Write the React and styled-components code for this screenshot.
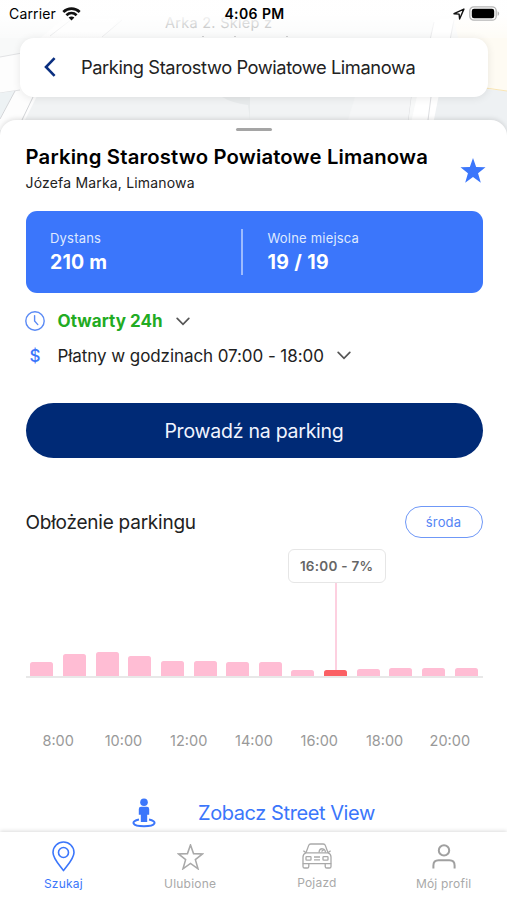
import React, { useState } from 'react';
import styled, { createGlobalStyle } from 'styled-components';

const OCCUPANCY = [
	{ hour: 7, height: 14 },
	{ hour: 8, height: 22.5 },
	{ hour: 9, height: 24 },
	{ hour: 10, height: 20 },
	{ hour: 11, height: 15.5 },
	{ hour: 12, height: 15.5 },
	{ hour: 13, height: 14 },
	{ hour: 14, height: 14 },
	{ hour: 15, height: 6 },
	{ hour: 16, height: 6, percent: 7 },
	{ hour: 17, height: 7 },
	{ hour: 18, height: 8 },
	{ hour: 19, height: 8 },
	{ hour: 20, height: 8 },
];

const HOURS = ['8:00', '10:00', '12:00', '14:00', '16:00', '18:00', '20:00'];

const STAR = 'M12 .8 L14.75 8.7 L22.9 9 L16.4 14.1 L18.8 22.4 L12 17.5 L5.2 22.4 L7.6 14.1 L1.1 9 L9.25 8.7 Z';

const WifiIcon = () => (
	<svg width="19" height="14" viewBox="0 0 19 14" fill="none" stroke="#111" strokeWidth="2.7">
		<path d="M1.3 4.9 C6 .5 13 .5 17.7 4.9" />
		<path d="M4.4 8.2 C7.4 5.5 11.6 5.5 14.6 8.2" />
		<path d="M9.5 13.6 L6.6 10.6 C8.3 9.2 10.7 9.2 12.4 10.6 Z" fill="#111" stroke="none" />
	</svg>
);

const LocationIcon = () => (
	<svg width="12" height="12" viewBox="0 0 12 12" fill="none" stroke="#111" strokeWidth="1.4" strokeLinejoin="round">
		<path d="M1 5.7 L10.9 1.1 L6.6 11 L6.1 6.1 Z" />
	</svg>
);

const BatteryIcon = () => (
	<svg width="31" height="15" viewBox="0 0 31 15">
		<rect x=".8" y=".8" width="26.4" height="13.4" rx="4" fill="#fff" stroke="#b5b5b5" strokeWidth="1.3" />
		<rect x="2.8" y="2.8" width="22.4" height="9.4" rx="2.2" fill="#000" />
		<path d="M28.6 5.2 C30.6 6 30.6 9 28.6 9.8 Z" fill="#b5b5b5" />
	</svg>
);

const ClockIcon = () => (
	<svg width="20" height="20" viewBox="0 0 20 20" fill="none" stroke="#5a8af5" strokeWidth="1.4" strokeLinecap="round">
		<circle cx="10" cy="10" r="9.2" />
		<path d="M9.6 4.6 V10 L12.8 13.6" />
	</svg>
);

const ChevronDown = () => (
	<svg width="14" height="9" viewBox="0 0 14 9" fill="none" stroke="#555" strokeWidth="1.7" strokeLinecap="round">
		<path d="M1.2 1.4 L7 7.3 L12.8 1.4" />
	</svg>
);

const StreetViewIcon = () => (
	<svg width="24" height="30" viewBox="0 0 24 30" fill="#3b76fb">
		<circle cx="12" cy="4.2" r="3.8" />
		<path d="M9 8.8 H15 Q17.2 8.8 17.2 11 V16.8 H15.2 V24 H8.8 V16.8 H6.8 V11 Q6.8 8.8 9 8.8 Z" />
		<path d="M7 21.5 C-1.5 23.2 -.5 28.2 12 28.2 C24.5 28.2 25.5 23.2 17 21.5" fill="none" stroke="#3b76fb" strokeWidth="1.9" />
	</svg>
);

const PinIcon = () => (
	<svg width="24" height="31" viewBox="0 0 24 31" fill="none" stroke="#3b76fb" strokeWidth="1.6" strokeLinejoin="round">
		<path d="M12.5 29.6 C8 23.5 2 17.5 2 11.5 C2 5.4 7 1 12.5 1 C18 1 23 5.4 23 11.5 C23 17.5 17 23.5 12.5 29.6 Z" />
		<circle cx="12.5" cy="11.5" r="5" />
	</svg>
);

const OutlineStar = () => (
	<svg width="27" height="26" viewBox="0 0 24 23.5" fill="none" stroke="#a9a9a9" strokeWidth="1.4">
		<path d={STAR} />
	</svg>
);

const CarIcon = () => (
	<svg width="30" height="26" viewBox="0 0 30 26" fill="none" stroke="#a9a9a9" strokeWidth="1.3" strokeLinejoin="round">
		<path d="M4 9.8 L6.6 2.6 Q7.1 1 8.8 1 H21.2 Q22.9 1 23.4 2.6 L26 9.8" />
		<path d="M4 9.8 H26 Q29 10.8 29 14 V20.6 H1 V14 Q1 10.8 4 9.8 Z" />
		<path d="M4 9.8 L1.4 7.8 M26 9.8 L28.6 7.8" />
		<path d="M1 20.6 V23.4 Q1 25 2.6 25 H5.2 Q6.8 25 6.8 23.4 V20.6 M23.2 20.6 V23.4 Q23.2 25 24.8 25 H27.4 Q29 25 29 23.4 V20.6" />
		<rect x="4" y="13.6" width="5" height="3.6" rx=".6" />
		<rect x="21" y="13.6" width="5" height="3.6" rx=".6" />
		<path d="M12 14 H18 M12 16.8 H18" />
		<path d="M17 9.6 C17.4 4.4 23.4 4.6 23.4 9.6 M19.5 8.6 L21.6 6.8" />
	</svg>
);

const ProfileIcon = () => (
	<svg width="24" height="26" viewBox="0 0 24 26" fill="none" stroke="#a0a0a0" strokeWidth="2">
		<circle cx="12" cy="6.4" r="5.2" />
		<path d="M1.4 24.4 V21.4 Q1.4 16.2 6.6 16.2 H17.4 Q22.6 16.2 22.6 21.4 V24.4" />
	</svg>
);

const TABS = [
	{ label: 'Szukaj', icon: <PinIcon /> },
	{ label: 'Ulubione', icon: <OutlineStar /> },
	{ label: 'Pojazd', icon: <CarIcon />, lift: 1 },
	{ label: 'Mój profil', icon: <ProfileIcon /> },
];

const MapBackground = () => (
	<StyledMap width="507" height="150" viewBox="0 0 507 150">
		<rect width="507" height="150" fill="#f8f9f9" />
		<path d="M0 97 H358 L350 150 H0 Z" fill="#f1f3f4" />
		<path d="M428 90 Q470 86 507 91 V150 H425 Z" fill="#eef1f3" />
		<path d="M454 20 L507 16 V91 L470 87 Z" fill="#fefbf3" />
		<path d="M470 87 Q490 88 507 91" stroke="#f8e5b4" fill="none" />
		<path d="M0 57 L22 53 L62 20 L120 18 L100 42 L40 90 L20 130 H0 Z" fill="#fdfdfd" />
		<path d="M0 57 L22 53 M50 36 L72 19 M102 37 L122 20 M0 93 L20 90" stroke="#e1e2e4" fill="none" />
		<path d="M0 93 L15 91 L0 118 Z" fill="#edf2f4" />
		<path d="M15 91 L0 119 M33 97 L22 120" stroke="#d3d5d8" fill="none" />
		<path d="M434 20 L454 18 L428 150 H405 Z" fill="#fff" />
		<path d="M434 22 L430 40 M454 20 L450 40 M411 97 L408 120 M431 97 L428 120" stroke="#dedfe2" fill="none" />
		<path d="M222 97 Q232 103 248 105 L250 120 V97 Z" fill="#e8ebec" />
		<path d="M355 97 L348 120 H408 L411 97 Z" fill="#f5f6f7" />
		<path d="M202 36.5 h2 M234 36.5 h2 M286 36.5 h2" stroke="#b4b5b6" />
		<text x="165" y="27.5" fill="#808283" fontSize="14.5" textLength="107">Arka 2. Sklep z</text>
	</StyledMap>
);

const App = () => {
	const [activeTab, setActiveTab] = useState('Szukaj');
	const [selectedHour] = useState(16);

	return (
		<StyledScreen>
			<GlobalStyle />
			<MapBackground />
			<StyledStatusBar>
				<StyledCarrier>
					<Text $size={14} $track={0.15}>Carrier</Text>
					<WifiIcon />
				</StyledCarrier>
				<Text $size={14} $weight={600} $track={0.4}>4:06 PM</Text>
				<StyledBattery>
					<LocationIcon />
					<BatteryIcon />
				</StyledBattery>
			</StyledStatusBar>

			<StyledHeader>
				<StyledBack aria-label="Wstecz">
					<svg width="12" height="20" viewBox="0 0 12 20" fill="none" stroke="#0a2f80" strokeWidth="2.6">
						<path d="M10.6 1.2 L2 10 L10.6 18.8" />
					</svg>
				</StyledBack>
				<Text $size={18.3} $track={-0.42} $color="#222">Parking Starostwo Powiatowe Limanowa</Text>
			</StyledHeader>

			<StyledSheet>
				<StyledHandle />
				<StyledTitleRow>
					<StyledTitles>
						<Text as="h1" $size={20.3} $weight={600} $track={0.17} $line={26}>Parking Starostwo Powiatowe Limanowa</Text>
						<Text $size={14} $track={0.18} $line={26} $color="#222">Józefa Marka, Limanowa</Text>
					</StyledTitles>
					<svg width="28" height="27" viewBox="0 0 24 23.5" fill="#3b76fb">
						<path d={STAR} />
					</svg>
				</StyledTitleRow>

				<StyledStats>
					<StyledStat>
						<Text $size={13} $track={0.2} $line={24} $color="#dfe9ff">Dystans</Text>
						<Text $size={19.5} $weight={700} $track={0.2} $line={25} $color="#fff">210 m</Text>
					</StyledStat>
					<StyledStat $divided>
						<Text $size={13} $track={0.2} $line={24} $color="#dfe9ff">Wolne miejsca</Text>
						<Text $size={19.5} $weight={700} $track={0.35} $line={25} $color="#fff">19 / 19</Text>
					</StyledStat>
				</StyledStats>

				<StyledInfo>
					<StyledInfoRow>
						<StyledInfoIcon><ClockIcon /></StyledInfoIcon>
						<Text $size={17} $weight={700} $track={0.06} $color="#22ab22">Otwarty 24h</Text>
						<ChevronDown />
					</StyledInfoRow>
					<StyledInfoRow>
						<StyledInfoIcon><Text $size={17} $weight={500} $color="#3b76fb">$</Text></StyledInfoIcon>
						<Text $size={17} $track={-0.07} $color="#222">Płatny w godzinach 07:00 - 18:00</Text>
						<ChevronDown />
					</StyledInfoRow>
				</StyledInfo>

				<StyledNavigate>
					<Text $size={19.5} $track={-0.24} $color="#f0f4ff">Prowadź na parking</Text>
				</StyledNavigate>

				<StyledSectionHead>
					<StyledSectionTitle $size={19} $track={-0.23} $color="#222">Obłożenie parkingu</StyledSectionTitle>
					<StyledDay>
						<Text $size={13} $track={0.2} $color="#5585f5">środa</Text>
					</StyledDay>
				</StyledSectionHead>

				<StyledChart>
					<StyledGridLine />
					<StyledGridLine />
					<StyledBars>
						{OCCUPANCY.map(({ hour, height, percent }) => (
							<StyledSlot key={hour}>
								{hour === selectedHour && (
									<StyledMarker>
										<StyledTooltip>
											<Text $size={13.5} $weight={600} $track={0.25} $color="#666">{hour}:00 - {percent}%</Text>
										</StyledTooltip>
										<StyledMarkerLine />
									</StyledMarker>
								)}
								<StyledBar $active={hour === selectedHour} style={{ height }} />
							</StyledSlot>
						))}
					</StyledBars>
				</StyledChart>
				<StyledHours>
					{HOURS.map((hour) => (
						<Text key={hour} $size={14.5} $color="#999">{hour}</Text>
					))}
				</StyledHours>

				<StyledStreetView>
					<StreetViewIcon />
					<Text $size={20} $track={-0.42} $color="#3b76fb">Zobacz Street View</Text>
				</StyledStreetView>
			</StyledSheet>

			<StyledTabBar>
				{TABS.map(({ label, icon, lift }) => (
					<StyledTab key={label} $lift={lift} onClick={() => setActiveTab(label)}>
						<StyledTabIcon>{icon}</StyledTabIcon>
						<Text $size={12} $track={0.2} $color={label === activeTab ? '#3b76fb' : '#a9a9a9'}>{label}</Text>
					</StyledTab>
				))}
			</StyledTabBar>
		</StyledScreen>
	);
}

export default App;

const GlobalStyle = createGlobalStyle`
	* {
		box-sizing: border-box;
	}

	body {
		margin: 0;
		background: #fff;
		font-family: Inter, 'Liberation Sans', sans-serif;
	}

	button {
		padding: 0;
		border: 0;
		background: none;
		font: inherit;
	}

	svg {
		display: block;
		flex: none;
	}
`

const Text = styled.span`
	display: block;
	margin: 0;
	white-space: nowrap;
	font-size: ${({ $size }) => $size}px;
	font-weight: ${({ $weight }) => $weight || 400};
	line-height: ${({ $line }) => $line || 20}px;
	letter-spacing: ${({ $track }) => $track || 0}px;
	color: ${({ $color }) => $color || '#000'};
`

const StyledScreen = styled.div`
	position: relative;
	display: flex;
	flex-direction: column;
	width: 507px;
	height: 900px;
	overflow: hidden;
`

const StyledMap = styled.svg`
	position: absolute;
	top: 0;
	left: 0;
	z-index: -1;
`

const StyledStatusBar = styled.div`
	display: grid;
	grid-template-columns: 1fr auto 1fr;
	align-items: center;
	height: 38px;
	padding: 0 7px 11px 9px;
	background: linear-gradient(rgba(255, 255, 255, 0.95) 40%, rgba(255, 255, 255, 0.3));
`

const StyledCarrier = styled.div`
	display: flex;
	align-items: center;
	gap: 6px;
`

const StyledBattery = styled.div`
	display: flex;
	align-items: center;
	justify-content: flex-end;
	gap: 4px;
`

const StyledHeader = styled.header`
	display: flex;
	align-items: center;
	gap: 25px;
	height: 59px;
	margin: 0 19px 23px 20px;
	padding: 0 0 1px 24px;
	border-radius: 14px;
	background: #fff;
	box-shadow: 0 1px 8px rgba(0, 0, 0, 0.09);
`

const StyledBack = styled.button`
	display: flex;
`

const StyledSheet = styled.main`
	display: flex;
	flex-direction: column;
	height: 712px;
	padding: 8px 24.5px 0 25.5px;
	border-radius: 16px 16px 0 0;
	background: #fff;
	box-shadow: 0 -1px 5px rgba(0, 0, 0, 0.13);
`

const StyledHandle = styled.div`
	align-self: center;
	width: 36px;
	height: 3px;
	margin-bottom: 13px;
	border-radius: 2px;
	background: #a5a5a5;
`

const StyledTitleRow = styled.div`
	display: flex;
	justify-content: space-between;
	align-items: center;
	height: 52px;
	margin-right: -4px;
`

const StyledTitles = styled.div`
	display: flex;
	flex-direction: column;
`

const StyledStats = styled.section`
	display: grid;
	grid-template-columns: 215.5px 1fr;
	align-items: center;
	height: 81.5px;
	margin-top: 15px;
	border-radius: 11px;
	background: #3b76fb;
`

const StyledStat = styled.div`
	display: flex;
	flex-direction: column;
	justify-content: center;
	height: 46px;
	padding: 0 0 2px 24.5px;
	border-left: ${({ $divided }) => ($divided ? '2px solid #9dbbfe' : 'none')};
`

const StyledInfo = styled.section`
	display: flex;
	flex-direction: column;
	gap: 14.5px;
	margin-top: 18.5px;
`

const StyledInfoRow = styled.div`
	display: flex;
	align-items: center;
	gap: 13px;
	height: 20px;
`

const StyledInfoIcon = styled.div`
	display: flex;
	justify-content: center;
	width: 19px;
`

const StyledNavigate = styled.button`
	display: flex;
	flex: none;
	align-items: center;
	justify-content: center;
	height: 55px;
	margin-top: 37.5px;
	border-radius: 28px;
	background: #002a76;
`

const StyledSectionHead = styled.div`
	display: flex;
	align-items: center;
	justify-content: space-between;
	margin-top: 48px;
`

const StyledSectionTitle = styled(Text).attrs({ as: 'h2' })`
	padding-top: 2px;
`

const StyledDay = styled.button`
	display: flex;
	align-items: center;
	justify-content: center;
	width: 78px;
	height: 32px;
	border: 1.3px solid #6f98f7;
	border-radius: 16px;
`

const StyledChart = styled.div`
	display: grid;
	grid-template-rows: 28px 29px;
	flex: none;
	height: 59px;
	margin-top: 81px;
	border-bottom: 2px solid #dedede;
`

const StyledGridLine = styled.div`
	grid-column: 1;
	border-top: 1px solid #e8e8e8;
`

const StyledBars = styled.div`
	display: flex;
	grid-row: 1 / 3;
	grid-column: 1;
	align-items: flex-end;
	height: 57px;
`

const StyledSlot = styled.div`
	position: relative;
	display: flex;
	flex: 1;
	justify-content: center;
`

const StyledBar = styled.div`
	width: 23px;
	border-radius: 2.5px 2.5px 0 0;
	background: ${({ $active }) => ($active ? '#fb6064' : '#ffbdd4')};
`

/* floats over the grid above the selected bar */
const StyledMarker = styled.div`
	position: absolute;
	bottom: 100%;
	display: flex;
	flex-direction: column;
	align-items: center;
`

const StyledTooltip = styled.div`
	display: flex;
	align-items: center;
	justify-content: center;
	width: 98px;
	height: 34px;
	margin-left: 2px;
	border: 1.5px solid #e6e6e6;
	border-radius: 6px;
	background: #fff;
`

const StyledMarkerLine = styled.div`
	width: 2px;
	height: 87px;
	background: #fdd0e0;
`

const StyledHours = styled.div`
	display: grid;
	grid-template-columns: repeat(7, 1fr);
	justify-items: center;
	margin-top: 52.5px;
`

const StyledStreetView = styled.a`
	display: flex;
	align-items: center;
	gap: 42px;
	margin: 47px 0 0 106.5px;
`

const StyledTabBar = styled.nav`
	display: grid;
	grid-template-columns: repeat(4, 1fr);
	position: relative;
	height: 68px;
	background: #fff;
	box-shadow: 0 -1px 4px rgba(0, 0, 0, 0.14);
`

const StyledTab = styled.button`
	display: flex;
	flex-direction: column;
	align-items: center;
	padding-top: ${({ $lift }) => 7 - ($lift || 0)}px;
`

const StyledTabIcon = styled.div`
	display: flex;
	align-items: center;
	height: 35px;
`
